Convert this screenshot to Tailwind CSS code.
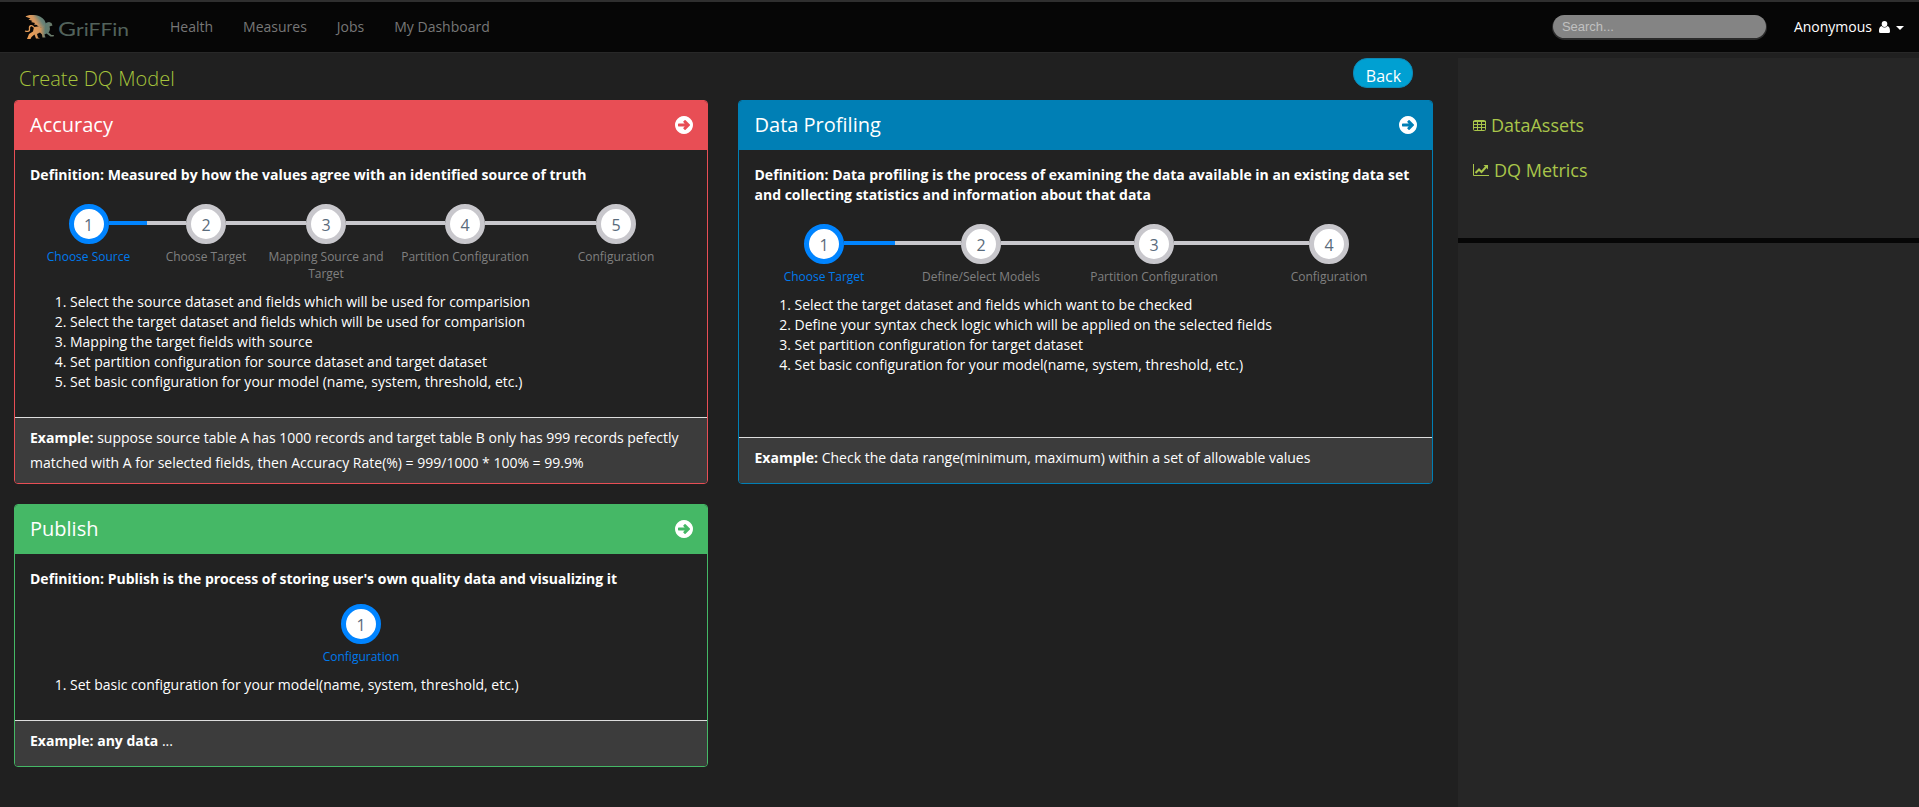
<!DOCTYPE html>
<html lang="en"><head><meta charset="utf-8"><title>Griffin</title>
<script src="https://cdn.jsdelivr.net/npm/@tailwindcss/browser@4"></script></head>
<body class="h-[807px] overflow-hidden bg-[#202020] font-['Open_Sans',sans-serif] text-[14px] leading-5 text-white flex flex-col">
<svg class="hidden">
<symbol id="go" viewBox="0 0 1536 1536"><path fill="currentColor" d="M1285 768q0-27-18-45L905 361q-18-18-45-18t-45 18l-91 91q-18 18-18 45t18 45l106 98H320q-26 0-45 19t-19 45v128q0 26 19 45t45 19h510l-106 98q-19 19-19 45t19 45l91 91q18 18 45 18t45-18l362-362q18-18 18-45zM1536 768q0 209-103 385.500T1153.500 1433 768 1536 382.500 1433 103 1153.500 0 768 103 382.500 382.500 103 768 0t385.500 103T1433 382.500 1536 768z"/></symbol>
</svg>
<header class="h-[53px] shrink-0 border-t-2 border-t-[#2f2f2f] border-b border-b-[#282828] bg-[#060606] flex items-start">
<div class="ml-[24px] mt-[10px] flex w-[106px]">
<svg class="h-[30px] w-[106px] overflow-visible" viewBox="0 0 106 30">
<defs><linearGradient id="g" x1="0" y1=".4" x2="1" y2="0"><stop offset="0" stop-color="#f0a055"/><stop offset=".4" stop-color="#cf9560"/><stop offset=".65" stop-color="#6b8478"/><stop offset="1" stop-color="#587269"/></linearGradient>
<linearGradient id="b"><stop offset="0" stop-color="#f0a055"/><stop offset=".5" stop-color="#d0955d"/><stop offset=".68" stop-color="#5f7c72"/><stop offset="1" stop-color="#6f7c68"/></linearGradient></defs>
<path fill="url(#g)" d="M1.500 5C3 2.500 11 2.500 16 4.500c4 2 6 5 6 9l-3 3-5-2-1-1.500-3-.5 1-1.500-4-1 1.500-1-4-1.500 2-1-4-1.500z"/>
<path fill="url(#b)" d="M10 15l4-.5 5 1.500c1-4 3-6 6-6l2.500 1 1 2.500-3 1c1 3 0 5-1 6l3 2.500h2.500l-.500 1.500h-3l-4-3-2 1 1 3h-3l-.500-3-2-2-3 1.500 1 3.500 2 1h-4l-1.500-4-3 2.500-1 2H3l2-5 4-2.500z"/>
<path d="M10 15.500C8 12.500 5 13.500 5.500 16.500s-1.500 3.500-4.500 2.500" fill="none" stroke="#e09a58" stroke-width="1.300"/>
<text x="34" y="24" textLength="71" lengthAdjust="spacingAndGlyphs" font-family="Lato" font-size="17" fill="#52625b"><tspan font-size="20">G</tspan>riFFin</text>
</svg></div>
<nav class="ml-[40px] mt-[15px] flex gap-[30px] text-[#777777]"><a>Health</a><a>Measures</a><a>Jobs</a><a>My Dashboard</a></nav>
<div class="ml-auto mt-[13px] h-[23px] w-[213px] rounded-[12px] bg-[#848484] shadow-[0_1px_0_1px_#2b2b2b] pl-[9px] font-['Liberation_Sans',sans-serif] text-[13px] leading-[24px] text-[#c0c0c0]">Search...</div>
<div class="ml-[28px] mr-[15px] mt-[15px] flex items-center"><span>Anonymous</span>
<svg class="ml-[7px] h-[12px] w-[11px]" viewBox="0 0 11 12" fill="#fff"><ellipse cx="5.500" cy="3" rx="2.800" ry="3"/><path d="M2.500 5C0 6 0 9 0 10.500Q0 12 1.500 12h8q1.500 0 1.500-1.500C11 9 11 6 8.500 5Q5.500 8 2.500 5z"/></svg>
<svg class="ml-[6px] mt-px h-[4px] w-[8px]" viewBox="0 0 8 4"><path fill="#fff" d="M0 0h8L4 4z"/></svg></div>
</header>
<div class="flex flex-1">
<main class="w-[1458px] shrink-0 pl-[14px] pt-[5px]">
<div class="flex h-[42px] items-start justify-between pl-[5px] pr-[45px]">
<h1 class="mt-[9px] text-[20px] font-light leading-[24px] text-[#a6c43c]">Create DQ Model</h1>
<button class="h-[30px] w-[60px] rounded-[14px] border border-[#0e87b4] bg-[#00a0d2] pl-px pt-[5px] text-[16px] leading-[24px] text-white">Back</button>
</div>
<div class="flex items-start gap-[30px]">
<div class="flex w-[694px] flex-col gap-[20px]">
<section class="flex h-[384px] flex-col overflow-hidden rounded-[4px] border border-[#e84e55] bg-[#222222]">
<h2 class="flex h-[49px] shrink-0 items-center justify-between bg-[#e84e55] pb-[2px] pl-[15px] pr-[14px] text-[20px]">Accuracy<svg class="size-[18px]"><use href="#go"/></svg></h2>
<div class="flex-1 px-[15px] pt-[15px]"><p class="font-bold">Definition: Measured by how the values agree with an identified source of truth</p>
<div class="mt-[19px] flex text-center">
<div class="w-[117px]"><div class="flex h-[40px] items-center"><i class="h-[4px] flex-1"></i><b class="size-[40px] rounded-full border-5 border-[#0084ff] bg-white text-[16px] font-normal leading-[32px] text-[#5a6b7b]">1</b><i class="-mt-[2px] h-[4px] flex-1 bg-[#0084ff]"></i></div><p class="mt-[4px] text-[12px] leading-[17px] text-[#007aec]">Choose Source</p></div>
<div class="w-[118px]"><div class="flex h-[40px] items-center"><i class="-mt-[2px] h-[4px] flex-1 bg-[#c8c7cc]"></i><b class="size-[40px] rounded-full border-5 border-[#c8c7cc] bg-white text-[16px] font-normal leading-[32px] text-[#5a6b7b]">2</b><i class="-mt-[2px] h-[4px] flex-1 bg-[#c8c7cc]"></i></div><p class="mt-[4px] text-[12px] leading-[17px] text-[#808080]">Choose Target</p></div>
<div class="w-[122px]"><div class="flex h-[40px] items-center"><i class="-mt-[2px] h-[4px] flex-1 bg-[#c8c7cc]"></i><b class="size-[40px] rounded-full border-5 border-[#c8c7cc] bg-white text-[16px] font-normal leading-[32px] text-[#5a6b7b]">3</b><i class="-mt-[2px] h-[4px] flex-1 bg-[#c8c7cc]"></i></div><p class="mt-[4px] text-[12px] leading-[17px] text-[#808080]">Mapping Source and Target</p></div>
<div class="w-[156px]"><div class="flex h-[40px] items-center"><i class="-mt-[2px] h-[4px] flex-1 bg-[#c8c7cc]"></i><b class="size-[40px] rounded-full border-5 border-[#c8c7cc] bg-white text-[16px] font-normal leading-[32px] text-[#5a6b7b]">4</b><i class="-mt-[2px] h-[4px] flex-1 bg-[#c8c7cc]"></i></div><p class="mt-[4px] text-[12px] leading-[17px] text-[#808080]">Partition Configuration</p></div>
<div class="w-[146px]"><div class="flex h-[40px] items-center"><i class="-mt-[2px] h-[4px] flex-1 bg-[#c8c7cc]"></i><b class="size-[40px] rounded-full border-5 border-[#c8c7cc] bg-white text-[16px] font-normal leading-[32px] text-[#5a6b7b]">5</b><i class="h-[4px] flex-1"></i></div><p class="mt-[4px] text-[12px] leading-[17px] text-[#808080]">Configuration</p></div>
</div>
<ol class="mt-[10px] list-decimal pl-[40px]"><li>Select the source dataset and fields which will be used for comparision</li><li>Select the target dataset and fields which will be used for comparision</li><li>Mapping the target fields with source</li><li>Set partition configuration for source dataset and target dataset</li><li>Set basic configuration for your model (name, system, threshold, etc.)</li></ol></div>
<footer class="h-[66px] border-t border-[#dddddd] bg-[#3c3c3c] px-[15px] pt-[7px] leading-[25px]"><b>Example:</b> suppose source table A has 1000 records and target table B only has 999 records pefectly matched with A for selected fields, then Accuracy Rate(%) = 999/1000 * 100% = 99.9%</footer>
</section>
<section class="flex h-[263px] flex-col overflow-hidden rounded-[4px] border border-[#45b866] bg-[#222222]">
<h2 class="flex h-[49px] shrink-0 items-center justify-between bg-[#45b866] pb-[2px] pl-[15px] pr-[14px] text-[20px]">Publish<svg class="size-[18px]"><use href="#go"/></svg></h2>
<div class="flex-1 px-[15px] pt-[15px]"><p class="font-bold">Definition: Publish is the process of storing user's own quality data and visualizing it</p>
<div class="mt-[15px] flex flex-col items-center text-center"><b class="size-[40px] rounded-full border-5 border-[#0084ff] bg-white text-[16px] font-normal leading-[32px] text-[#5a6b7b]">1</b><p class="mt-[4px] text-[12px] leading-[17px] text-[#007aec]">Configuration</p></div>
<ol class="mt-[10px] list-decimal pl-[40px]"><li>Set basic configuration for your model(name, system, threshold, etc.)</li></ol></div>
<footer class="h-[46px] border-t border-[#dddddd] bg-[#3c3c3c] px-[15px] pt-[7px] leading-[25px]"><b>Example: any data</b> ...</footer>
</section>
</div>
<section class="flex h-[384px] w-[695px] flex-col overflow-hidden rounded-[4px] border border-[#007fb5] bg-[#222222]">
<h2 class="flex h-[49px] shrink-0 items-center justify-between bg-[#007fb5] pb-[2px] pl-[15.500px] pr-[15px] text-[20px]">Data Profiling<svg class="size-[18px]"><use href="#go"/></svg></h2>
<div class="flex-1 pl-[15.500px] pr-[14px] pt-[15px]"><p class="font-bold">Definition: Data profiling is the process of examining the data available in an existing data set and collecting statistics and information about that data</p>
<div class="-ml-[1.500px] mt-[19px] flex text-center">
<div class="w-[142px]"><div class="flex h-[40px] items-center"><i class="h-[4px] flex-1"></i><b class="size-[40px] rounded-full border-5 border-[#0084ff] bg-white text-[16px] font-normal leading-[32px] text-[#5a6b7b]">1</b><i class="-mt-[2px] h-[4px] flex-1 bg-[#0084ff]"></i></div><p class="mt-[4px] text-[12px] leading-[17px] text-[#007aec]">Choose Target</p></div>
<div class="w-[172px]"><div class="flex h-[40px] items-center"><i class="-mt-[2px] h-[4px] flex-1 bg-[#c8c7cc]"></i><b class="size-[40px] rounded-full border-5 border-[#c8c7cc] bg-white text-[16px] font-normal leading-[32px] text-[#5a6b7b]">2</b><i class="-mt-[2px] h-[4px] flex-1 bg-[#c8c7cc]"></i></div><p class="mt-[4px] text-[12px] leading-[17px] text-[#808080]">Define/Select Models</p></div>
<div class="w-[174px]"><div class="flex h-[40px] items-center"><i class="-mt-[2px] h-[4px] flex-1 bg-[#c8c7cc]"></i><b class="size-[40px] rounded-full border-5 border-[#c8c7cc] bg-white text-[16px] font-normal leading-[32px] text-[#5a6b7b]">3</b><i class="-mt-[2px] h-[4px] flex-1 bg-[#c8c7cc]"></i></div><p class="mt-[4px] text-[12px] leading-[17px] text-[#808080]">Partition Configuration</p></div>
<div class="w-[176px]"><div class="flex h-[40px] items-center"><i class="-mt-[2px] h-[4px] flex-1 bg-[#c8c7cc]"></i><b class="size-[40px] rounded-full border-5 border-[#c8c7cc] bg-white text-[16px] font-normal leading-[32px] text-[#5a6b7b]">4</b><i class="h-[4px] flex-1"></i></div><p class="mt-[4px] text-[12px] leading-[17px] text-[#808080]">Configuration</p></div>
</div>
<ol class="mt-[10px] list-decimal pl-[40px]"><li>Select the target dataset and fields which want to be checked</li><li>Define your syntax check logic which will be applied on the selected fields</li><li>Set partition configuration for target dataset</li><li>Set basic configuration for your model(name, system, threshold, etc.)</li></ol></div>
<footer class="h-[46px] border-t border-[#dddddd] bg-[#3c3c3c] pl-[15.500px] pr-[14px] pt-[7px] leading-[25px]"><b>Example:</b> Check the data range(minimum, maximum) within a set of allowable values</footer>
</section>
</div>
</main>
<aside class="mt-[5px] flex-1 bg-[#262626]">
<div class="flex h-[185px] flex-col gap-[21px] border-b-5 border-[#060606] pl-[15px] pt-[55px] text-[18px] leading-[24px] text-[#a9c54a]">
<a class="flex items-center"><svg class="mr-[5px] h-[11px] w-[13px]" viewBox="0 0 13 11" fill="none" stroke="currentColor"><rect x=".5" y=".5" width="12" height="10" rx="1"/><path d="M0 1.500h13M0 4.500h13M0 7.500h13M4.500 1v10M8.500 1v10"/></svg>DataAssets</a>
<a class="flex items-center"><svg class="mr-[5px] h-[12px] w-[16px]" viewBox="0 0 16 12" fill="none" stroke="currentColor"><path d="M.5 0v11.500H16"/><path stroke-width="2" d="M2.500 9l3.500-3.500 2.500 2.500 4.500-5"/><path fill="currentColor" stroke="none" d="M10.500 1H15v4.500z"/></svg>DQ Metrics</a>
</div>
</aside>
</div>
</body></html>
